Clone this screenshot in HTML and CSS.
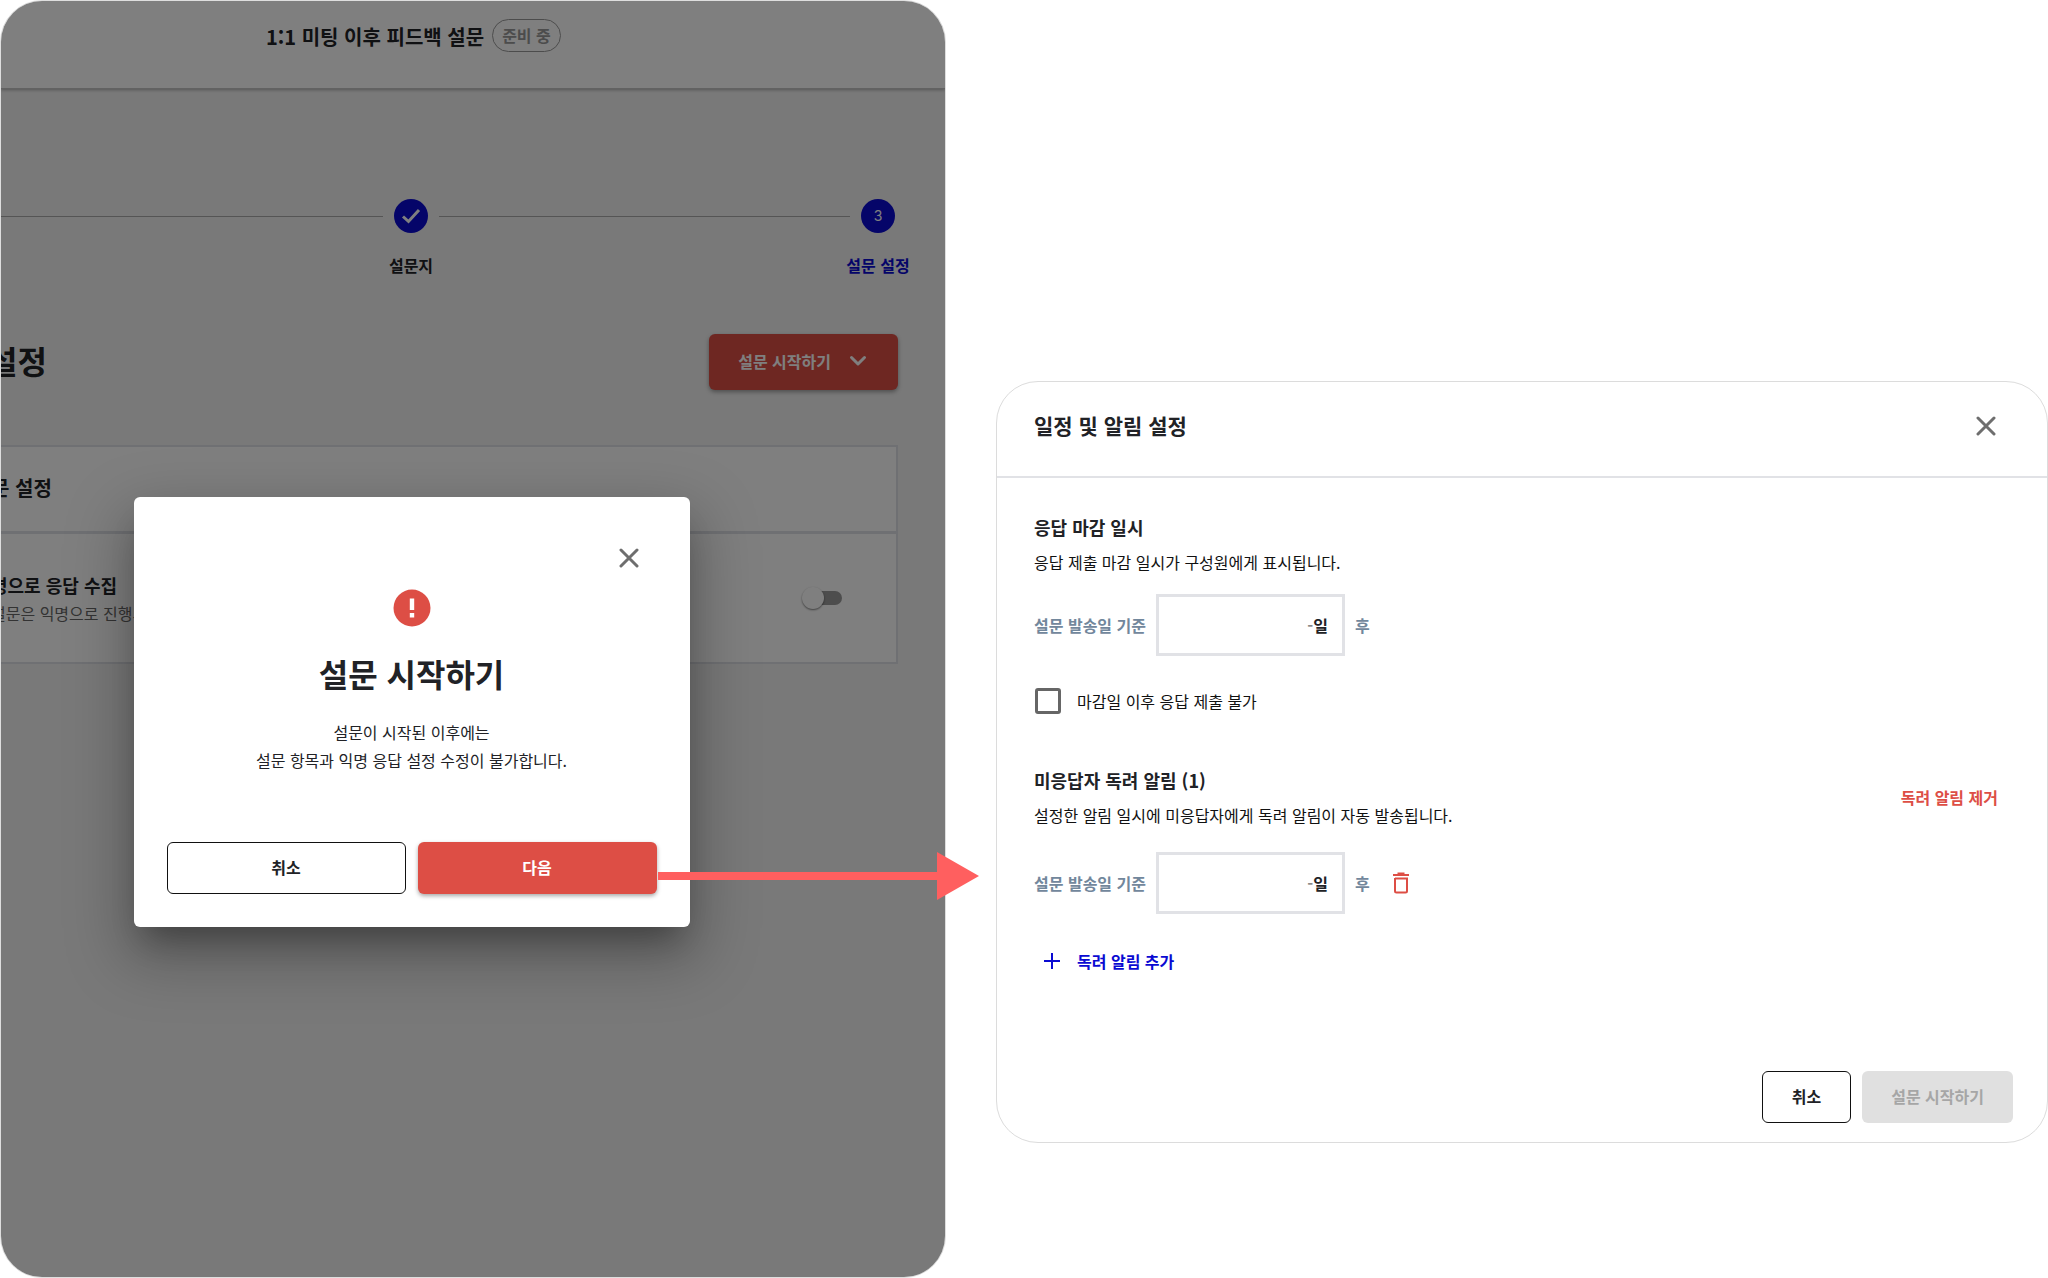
FILE: index.html
```html
<!DOCTYPE html>
<html lang="ko">
<head>
<meta charset="utf-8">
<meta name="viewport" content="width=device-width, initial-scale=1">
<title>1:1 미팅 이후 피드백 설문</title>
<link rel="stylesheet" href="styles.css">
</head>
<body>
<main class="flow">
  <section class="screen">
    <div class="app">
      <header class="app-header">
        <h1 class="app-title">1:1 미팅 이후 피드백 설문</h1>
        <span class="chip">준비 중</span>
      </header>

      <ol class="stepper">
        <li class="step-line"></li>
        <li class="step">
          <span class="step-dot">
            <svg width="20" height="20" viewBox="0 0 20 20" fill="none" stroke="currentColor" stroke-width="3" aria-hidden="true"><path d="M2 10.500L7.500 15.500L18 4"/></svg>
          </span>
          <span class="step-label">설문지</span>
        </li>
        <li class="step-line"></li>
        <li class="step step-current">
          <span class="step-dot">3</span>
          <span class="step-label">설문 설정</span>
        </li>
      </ol>

      <div class="page-head">
        <h2 class="page-title">설정</h2>
        <button class="btn btn-danger btn-start" type="button">설문 시작하기
          <svg width="18" height="12" viewBox="0 0 18 12" fill="none" stroke="currentColor" stroke-width="3" stroke-linecap="round" stroke-linejoin="round" aria-hidden="true"><path d="M2.500 2.500L9 9L15.500 2.500"/></svg>
        </button>
      </div>

      <div class="settings">
        <h3 class="settings-title">문 설정</h3>
        <div class="settings-row">
          <div class="settings-text">
            <label class="settings-label" for="anonymous">명으로 응답 수집</label>
            <p class="settings-note">설문은 익명으로 진행되</p>
          </div>
          <input class="switch" id="anonymous" type="checkbox" role="switch">
        </div>
      </div>
    </div>

    <div class="backdrop"></div>

    <div class="modal-layer">
      <div class="modal" role="dialog" aria-labelledby="modal-title">
        <button class="icon-btn modal-close" type="button" aria-label="닫기">
          <svg width="20" height="20" viewBox="0 0 20 20" fill="none" stroke="currentColor" stroke-width="3" stroke-linecap="round" aria-hidden="true"><path d="M2 2L18 18M18 2L2 18"/></svg>
        </button>
        <svg class="alert" width="38" height="38" viewBox="0 0 38 38" aria-hidden="true">
          <circle cx="19" cy="19" r="18.500" fill="#dd4e45"/>
          <path d="M16.800 9.500h4.400v11.500h-4.400zM16.800 24h4.400v4.400h-4.400z" fill="#fff"/>
        </svg>
        <h2 class="modal-title" id="modal-title">설문 시작하기</h2>
        <p class="modal-text">설문이 시작된 이후에는<br>설문 항목과 익명 응답 설정 수정이 불가합니다.</p>
        <div class="modal-actions">
          <button class="btn btn-outline" type="button">취소</button>
          <div class="next">
            <button class="btn btn-danger" type="button">다음</button>
            <svg class="arrow" viewBox="0 0 322 48" width="322" height="48" aria-hidden="true"><path d="M1 20H280V0L322 24L280 48V28H1Z" fill="#ff5f5f"/></svg>
          </div>
        </div>
      </div>
    </div>
  </section>

  <form class="card">
    <header class="card-header">
      <h2 class="card-title">일정 및 알림 설정</h2>
      <button class="icon-btn" type="button" aria-label="닫기">
        <svg width="20" height="20" viewBox="0 0 20 20" fill="none" stroke="currentColor" stroke-width="3" stroke-linecap="round" aria-hidden="true"><path d="M2 2L18 18M18 2L2 18"/></svg>
      </button>
    </header>

    <div class="card-body">
      <section class="group">
        <h3 class="group-title">응답 마감 일시</h3>
        <p class="group-note">응답 제출 마감 일시가 구성원에게 표시됩니다.</p>
        <div class="field deadline">
          <label for="deadline">설문 발송일 기준</label>
          <span class="days"><input id="deadline" type="text" inputmode="numeric" placeholder="-"><span>일</span></span>
          <span>후</span>
        </div>
        <label class="check"><input type="checkbox">마감일 이후 응답 제출 불가</label>
      </section>

      <section class="group">
        <div class="group-head">
          <div>
            <h3 class="group-title">미응답자 독려 알림 (1)</h3>
            <p class="group-note">설정한 알림 일시에 미응답자에게 독려 알림이 자동 발송됩니다.</p>
          </div>
          <button class="text-btn remove" type="button">독려 알림 제거</button>
        </div>
        <div class="field reminder">
          <label for="reminder">설문 발송일 기준</label>
          <span class="days"><input id="reminder" type="text" inputmode="numeric" placeholder="-"><span>일</span></span>
          <span>후</span>
          <button class="icon-btn trash" type="button" aria-label="삭제">
            <svg width="18" height="22" viewBox="0 0 18 22" fill="none" stroke="currentColor" stroke-width="2" aria-hidden="true"><path d="M1 3H17M5.500 1.500H12.500M3 6V19Q3 20.500 4.500 20.500H13.500Q15 20.500 15 19V6.500H3"/></svg>
          </button>
        </div>
        <button class="text-btn add" type="button">
          <svg width="18" height="18" viewBox="0 0 18 18" fill="none" stroke="currentColor" stroke-width="2" aria-hidden="true"><path d="M9 1V17M1 9H17"/></svg>독려 알림 추가
        </button>
      </section>
    </div>

    <footer class="card-footer">
      <button class="btn btn-outline" type="button">취소</button>
      <button class="btn btn-disabled" type="submit" disabled>설문 시작하기</button>
    </footer>
  </form>
</main>
</body>
</html>
```

FILE: styles.css
```css
:root {
  --danger: #dd4e45;
  --primary: #0a0ad2;
  --ink: #212226;
  --muted: #72879c;
  --line: #e1e2e6;
}

* {
  box-sizing: border-box;
}

body {
  margin: 0;
  background: #fff;
  color: var(--ink);
  font-family: "Noto Sans CJK KR", "Noto Sans", sans-serif;
  font-size: 16px;
  line-height: 24px;
}

h1, h2, h3, p, ol {
  margin: 0;
  padding: 0;
}

button, input {
  font: inherit;
  color: inherit;
}

button {
  margin: 0;
  cursor: pointer;
}

svg {
  display: block;
}

.flow {
  display: grid;
  grid-template-columns: 946fr 1052fr;
  gap: 50px;
  min-height: 100vh;
}

/* Buttons */

.btn {
  display: flex;
  align-items: center;
  justify-content: center;
  height: 52px;
  padding: 0 29px 2px;
  border: 0;
  border-radius: 6px;
  font-weight: 700;
  white-space: nowrap;
}

.btn-outline {
  border: 1px solid #111;
  background: #fff;
}

.btn-danger {
  background: var(--danger);
  color: #fff;
  box-shadow: 0 2px 4px rgba(0, 0, 0, .35);
}

.btn-disabled {
  background: #e0e0e0;
  color: #a6a6a6;
}

.icon-btn {
  padding: 0;
  border: 0;
  background: none;
  color: #6e6e6e;
}

.text-btn {
  padding: 0;
  border: 0;
  background: none;
  font-weight: 700;
}

/* Survey screen */

.screen {
  position: relative;
  min-width: 0;
}

.app {
  height: 100%;
  overflow: hidden;
  border: 1px solid #dedede;
  border-radius: 42px;
  background: #f2f2f2;
}

.app-header {
  display: flex;
  align-items: flex-start;
  gap: 8px;
  height: 88px;
  padding: 18px 0 0 265px;
  border-bottom: 1px solid #c4c4c4;
  background: #fff;
  box-shadow: 0 1px 3px rgba(0, 0, 0, .3);
}

.app-title {
  font-size: 20px;
  line-height: 36px;
  white-space: nowrap;
}

.chip {
  padding: 3px 9px 4px;
  border: 1px solid #999;
  border-radius: 17px;
  color: #999;
  font-weight: 700;
  white-space: nowrap;
}

.stepper {
  display: flex;
  align-items: flex-start;
  margin: 110px 39px 0 -29px;
  list-style: none;
}

.step-line {
  flex: 1;
  height: 1px;
  margin-top: 17px;
  background: #aaa;
}

.step {
  display: flex;
  flex-direction: column;
  align-items: center;
  gap: 20px;
  width: 56px;
  font-weight: 700;
  white-space: nowrap;
}

.step-dot {
  display: grid;
  place-items: center;
  width: 34px;
  height: 34px;
  border-radius: 50%;
  background: var(--primary);
  color: #fff;
  font-family: Inter, sans-serif;
  font-size: 14px;
  font-weight: 400;
}

.step-current .step-label {
  color: var(--primary);
}

.page-head {
  display: flex;
  align-items: center;
  justify-content: space-between;
  margin: 57px 47px 0 -13px;
}

.page-title {
  padding-bottom: 4px;
  font-size: 32px;
  line-height: 48px;
}

.btn-start {
  gap: 18px;
  height: 56px;
  padding-right: 31px;
}

.settings {
  margin: 55px 47px 0 -40px;
  border: 2px solid #dfe1e6;
  background: #fff;
}

.settings-title {
  padding: 23px 28px 25px;
  border-bottom: 3px solid #dfe1e6;
  font-size: 20px;
  line-height: 36px;
}

.settings-row {
  display: flex;
  align-items: center;
  justify-content: space-between;
  height: 128px;
  padding: 0 54px 0 28px;
}

.settings-label {
  font-size: 18px;
  line-height: 28px;
  font-weight: 700;
}

.settings-note {
  margin-top: 2px;
  color: #666;
}

.switch {
  position: relative;
  width: 34px;
  height: 14px;
  margin: 0;
  border-radius: 7px;
  background: #9a9a9a;
  appearance: none;
}

.switch::before {
  content: "";
  position: absolute;
  top: -4px;
  left: -6px;
  width: 22px;
  height: 22px;
  border-radius: 50%;
  background: #fff;
  box-shadow: 0 1px 2px rgba(0, 0, 0, .5);
}

.backdrop {
  position: absolute;
  inset: 1px;
  border-radius: 41px;
  background: rgba(0, 0, 0, .5);
}

/* Confirmation dialog */

.modal-layer {
  position: absolute;
  inset: 0 123px 0 0;
  display: flex;
  align-items: flex-start;
  justify-content: center;
  padding-top: 497px;
}

.modal {
  display: flex;
  flex-direction: column;
  align-items: center;
  width: 556px;
  padding: 51px 33px 33px;
  border-radius: 6px;
  background: #fff;
  box-shadow: 0 22px 30px -12px rgba(0, 0, 0, .3), 0 24px 60px 10px rgba(0, 0, 0, .25);
}

.modal-close {
  align-self: flex-end;
  margin-right: 18px;
}

.alert {
  margin-top: 21px;
}

.modal-title {
  margin-top: 22px;
  font-size: 32px;
  line-height: 48px;
}

.modal-text {
  margin-top: 21px;
  line-height: 28px;
  text-align: center;
}

.modal-actions {
  display: grid;
  grid-template-columns: 1fr 1fr;
  gap: 12px;
  align-self: stretch;
  margin-top: 68px;
}

.next {
  position: relative;
}

.next .btn {
  width: 100%;
}

.arrow {
  position: absolute;
  top: 10px;
  left: 100%;
}

/* Schedule card */

.card {
  display: flex;
  flex-direction: column;
  align-self: start;
  margin-top: 381px;
  border: 1px solid #dcdcdc;
  border-radius: 42px;
}

.card-header {
  display: flex;
  align-items: center;
  justify-content: space-between;
  height: 96px;
  padding: 0 51px 6px 37px;
  border-bottom: 2px solid var(--line);
}

.card-title {
  padding-bottom: 2px;
  font-size: 21px;
  line-height: 36px;
}

.card-body {
  padding: 35px 49px 0 37px;
}

.group + .group {
  margin-top: 52px;
}

.group-head {
  display: flex;
  align-items: center;
  justify-content: space-between;
}

.group-title {
  font-size: 18px;
  line-height: 28px;
}

.group-note {
  margin-top: 9px;
  color: #111;
}

.field {
  display: flex;
  align-items: center;
  gap: 10px;
  color: var(--muted);
  font-weight: 700;
}

.deadline {
  margin-top: 20px;
}

.reminder {
  margin-top: 25px;
}

.days {
  display: flex;
  align-items: center;
  width: 189px;
  height: 62px;
  padding: 0 14px;
  border: 3px solid var(--line);
  color: var(--ink);
}

.days input {
  flex: 1;
  min-width: 0;
  padding: 0;
  border: 0;
  outline: 0;
  background: none;
  text-align: right;
}

.days input::placeholder {
  color: #8a8a8a;
}

.check {
  display: flex;
  align-items: center;
  gap: 16px;
  margin: 32px 0 0 1px;
  color: #111;
}

.check input {
  width: 26px;
  height: 26px;
  margin: 0;
  border: 3px solid #666;
  border-radius: 3px;
  appearance: none;
}

.remove {
  color: var(--danger);
}

.trash {
  margin-left: 12px;
  color: var(--danger);
}

.add {
  display: flex;
  align-items: center;
  gap: 16px;
  margin: 35px 0 0 9px;
  color: var(--primary);
}

.card-footer {
  display: flex;
  justify-content: flex-end;
  gap: 11px;
  margin-top: 98px;
  padding: 0 34px 19px;
}
```
